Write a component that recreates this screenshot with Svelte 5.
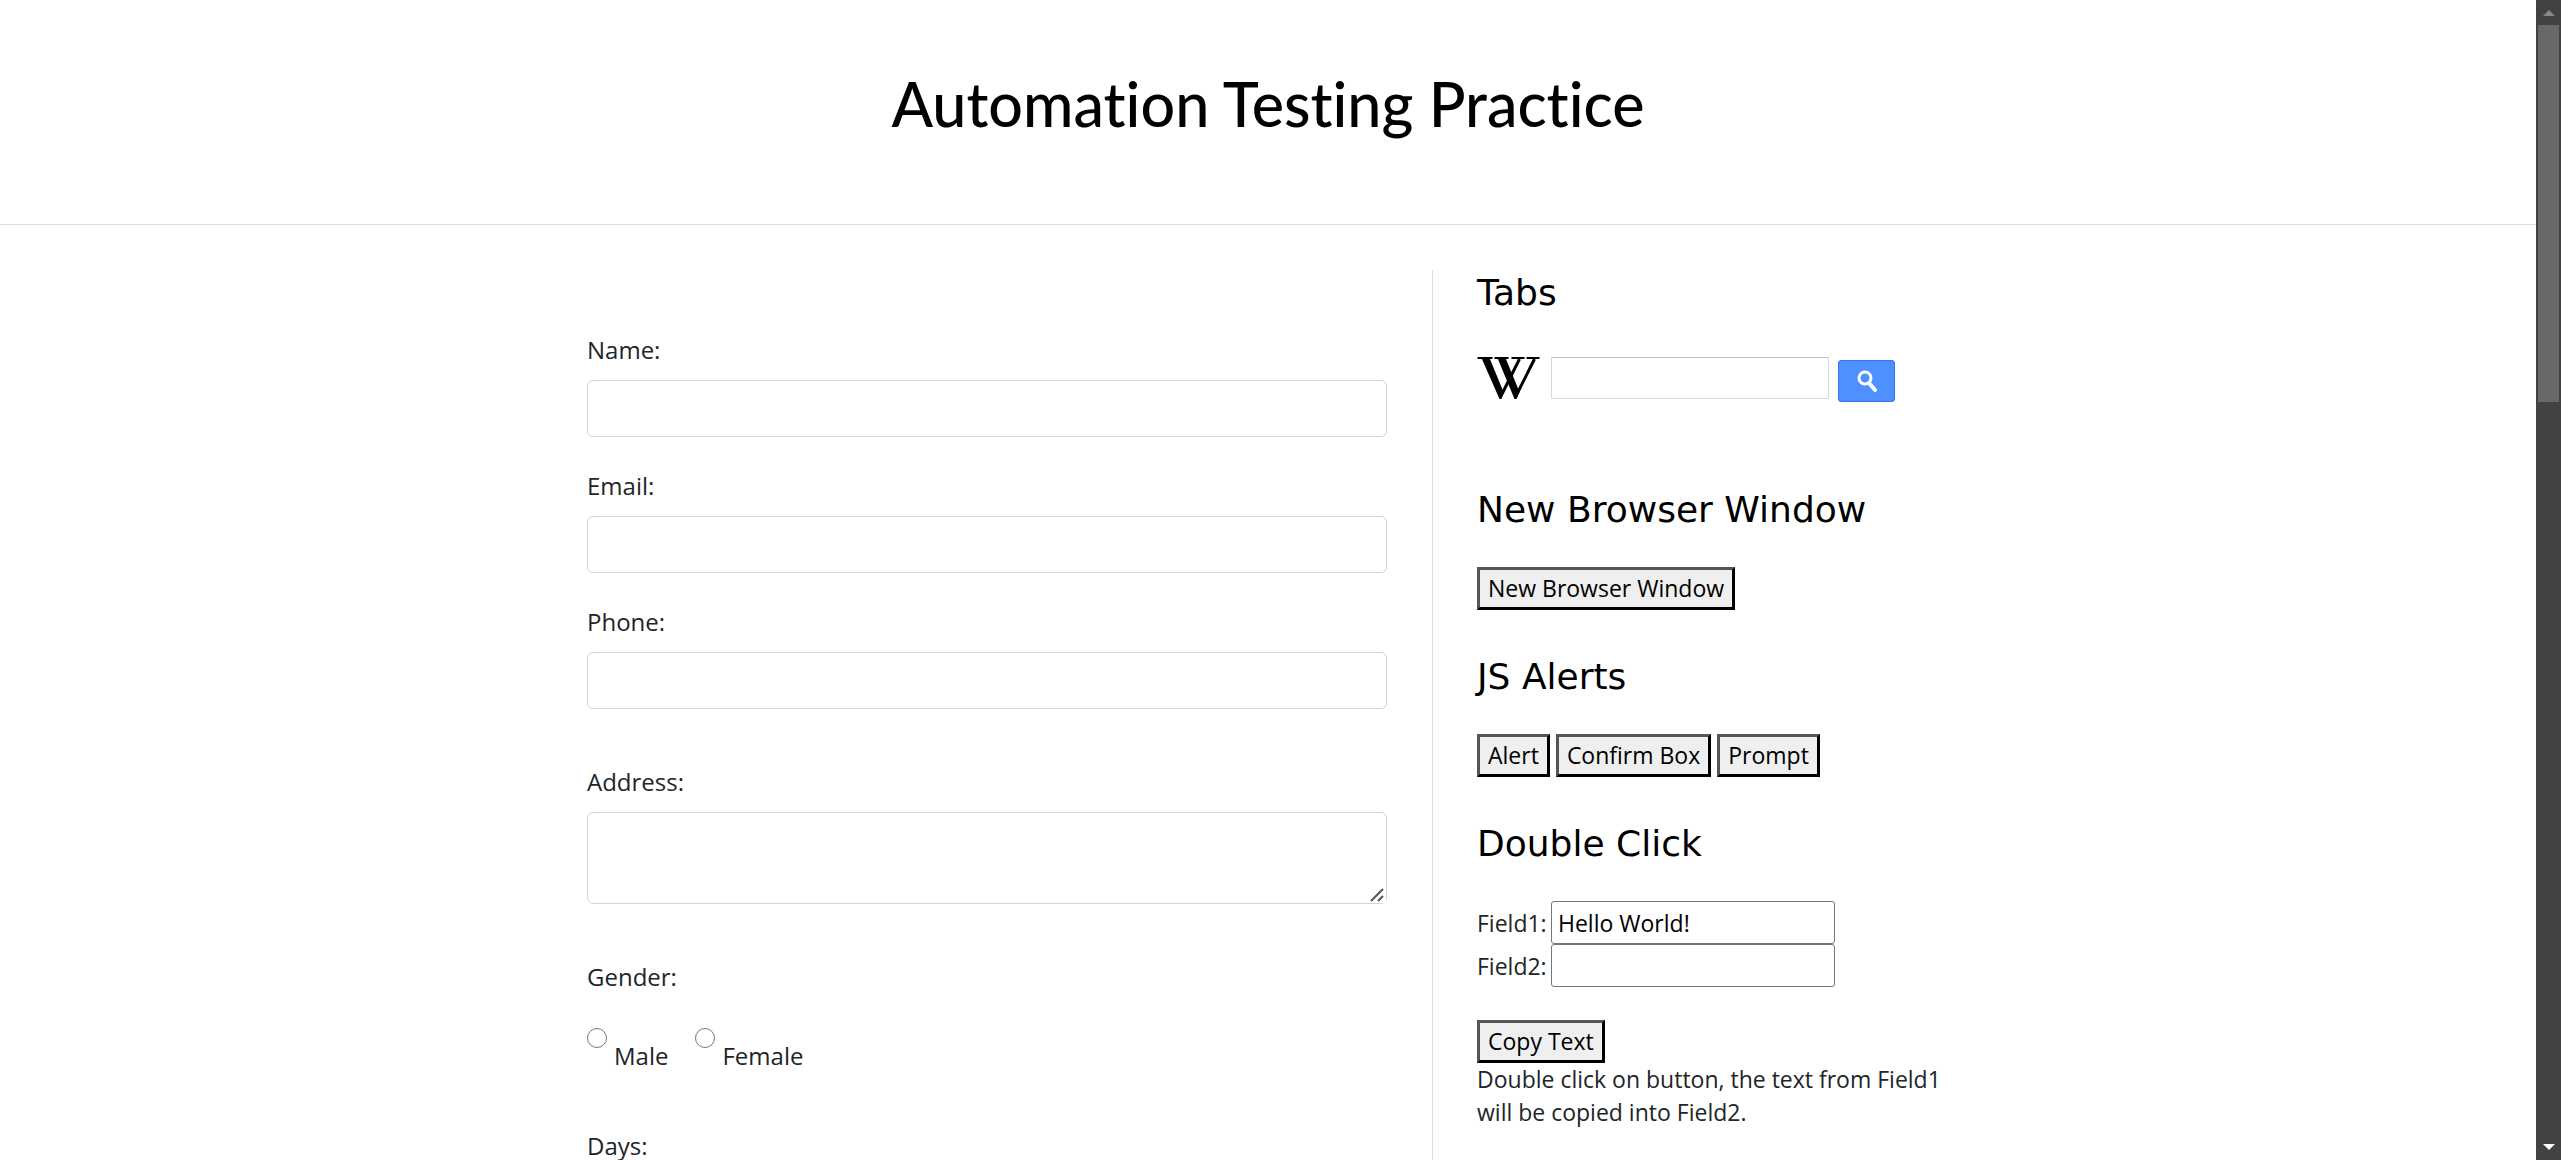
<script>
  const fields = [
    { id: 'name', label: 'Name:', type: 'text' },
    { id: 'email', label: 'Email:', type: 'email' },
    { id: 'phone', label: 'Phone:', type: 'tel' }
  ];
  const genders = ['Male', 'Female'];
  const alerts = ['Alert', 'Confirm Box', 'Prompt'];
  let field1 = $state('Hello World!');
  let field2 = $state('');
  let gender = $state('');
  let query = $state('');
</script>

<div class="window">
  <div class="page">
    <header><h1>Automation Testing Practice</h1></header>
    <div class="columns">
      <main>
        <form>
          {#each fields as f}
            <div class="group">
              <label for={f.id}>{f.label}</label>
              <input class="control" id={f.id} type={f.type} />
            </div>
          {/each}
          <div class="group spaced">
            <label for="address">Address:</label>
            <div class="area">
              <textarea class="control" id="address"></textarea>
              <svg class="grip" viewBox="0 0 14 14" aria-hidden="true"><path d="M1 13L13 1M8 13L13 8" /></svg>
            </div>
          </div>
          <fieldset class="spaced">
            <legend>Gender:</legend>
            <div class="radios">
              {#each genders as g}
                <label class="radio"><input type="radio" name="gender" value={g} bind:group={gender} />{g}</label>
              {/each}
            </div>
          </fieldset>
          <fieldset class="days"><legend>Days:</legend></fieldset>
        </form>
      </main>
      <aside>
        <section class="tabs">
          <h2>Tabs</h2>
          <form class="search">
            <svg class="wiki" viewBox="0 0 62 42" role="img" aria-label="Wikipedia">
              <g fill="#000">
                <path d="M4 1H12L26 35L24 42H22Z" />
                <path d="M20 1H28L42 35L39 42H37Z" />
              </g>
              <g fill="none" stroke="#000">
                <path d="M23 40L42 2M38 40L57 2" stroke-width="3" />
                <path d="M0 1H15M17 1H31M34 1H47M49 1H62" stroke-width="2" />
              </g>
            </svg>
            <input type="text" aria-label="Search Wikipedia" bind:value={query} />
            <button type="button" aria-label="Search">
              <svg viewBox="0 0 22 24"><circle cx="9" cy="9" r="6" fill="none" stroke="#fff" stroke-width="3" /><path d="M13 14L19 21" stroke="#fff" stroke-width="4" stroke-linecap="round" /></svg>
            </button>
          </form>
        </section>
        <section>
          <h2>New Browser Window</h2>
          <div class="row"><button class="plain" type="button">New Browser Window</button></div>
        </section>
        <section>
          <h2>JS Alerts</h2>
          <div class="row">
            {#each alerts as a}<button class="plain" type="button">{a}</button>{/each}
          </div>
        </section>
        <section>
          <h2>Double Click</h2>
          <div class="pair"><label for="field1">Field1:</label><input id="field1" bind:value={field1} /></div>
          <div class="pair"><label for="field2">Field2:</label><input id="field2" bind:value={field2} /></div>
          <button class="plain copy" type="button" ondblclick={() => (field2 = field1)}>Copy Text</button>
          <p>Double click on button, the text from Field1 will be copied into Field2.</p>
        </section>
      </aside>
    </div>
  </div>
  <div class="scrollbar" aria-hidden="true">
    <svg class="up" viewBox="0 0 12 6"><path d="M0 6L6 0L12 6Z" /></svg>
    <div class="track"><div class="thumb"></div></div>
    <svg class="down" viewBox="0 0 12 6"><path d="M0 0H12L6 6Z" /></svg>
  </div>
</div>

<style>
  :global(body) { margin: 0; background: #fff; }
  .window, .window * { box-sizing: border-box; }
  .window {
    display: flex;
    height: 100vh;
    overflow: hidden;
    font-family: 'Open Sans', sans-serif;
    font-size: 23px;
    line-height: 33px;
    color: #212529;
  }
  .page { flex: 1; min-width: 0; overflow: hidden; background: #fff; }
  header { padding: 64px 0 80px; border-bottom: 1px solid #ddd; }
  h1 {
    margin: 0;
    font: 500 61px/80px Lato, sans-serif;
    font-variant-ligatures: none;
    text-align: center;
    color: #000;
  }
  .columns {
    display: grid;
    grid-template-columns: 891px 1fr;
    width: 100%;
    max-width: 1452px;
    margin: 45px auto 0;
  }
  main { padding: 60px 45px 48px; border-right: 1px solid #ddd; font-size: 24px; }
  aside { padding: 0 45px 0 44px; }
  label, legend { display: block; padding: 0; line-height: 40px; }
  fieldset { margin: 0; padding: 0; border: 0; }
  .group { margin-bottom: 29px; }
  .group label { margin-bottom: 10px; }
  .spaced { margin-top: 53px; }
  .control {
    display: block;
    width: 100%;
    height: 57px;
    padding: 8px 18px;
    border: 1px solid #ced4da;
    border-radius: 6px;
    background: #fff;
    font: inherit;
  }
  .area { position: relative; }
  textarea.control { height: 92px; }
  textarea::-webkit-resizer { background: #fff; }
  .grip {
    position: absolute;
    right: 3px;
    bottom: 2px;
    width: 14px;
    height: 14px;
    fill: none;
    stroke: #555;
    stroke-width: 2;
    pointer-events: none;
  }
  .radios { display: flex; gap: 27px; margin-top: 39px; }
  .radio { display: flex; gap: 7px; }
  .radio input { width: 20px; height: 20px; margin: -8px 0 0; }
  .days { margin-top: 50px; }
  h2 {
    margin: 0 0 34px;
    font: 400 36px/46px 'DejaVu Sans', sans-serif;
    color: #000;
  }
  section { margin-bottom: 44px; }
  .search { display: flex; height: 93px; padding-top: 7px; }
  .search .wiki { width: 63px; height: 42px; }
  .search input {
    width: 278px;
    height: 42px;
    margin: 0 9px 0 11px;
    padding: 0 8px;
    border: 1px solid #d9d9d9;
    border-top-color: #c0c0c0;
    background: #fff;
    font: inherit;
  }
  .search button {
    display: flex;
    align-items: center;
    justify-content: center;
    width: 57px;
    height: 42px;
    margin-top: 3px;
    padding: 0;
    border: 1px solid #3079ed;
    border-radius: 3px;
    background: #4d90fe;
  }
  .search button svg { width: 22px; height: 24px; }
  .row { display: flex; gap: 6px; }
  .plain {
    display: block;
    height: 43px;
    padding: 0 8px;
    border: 3px solid;
    border-color: #555 #000 #000 #555;
    background: #efefef;
    font: inherit;
    color: #000;
  }
  .pair { display: flex; align-items: center; gap: 6px; }
  .pair label { width: 68px; }
  .pair input {
    width: 284px;
    height: 43px;
    padding: 0 6px;
    border: 1px solid #767676;
    border-radius: 3px;
    background: #fff;
    font: inherit;
    color: #000;
  }
  .copy { margin-top: 33px; }
  p { margin: 0; }
  .scrollbar { display: flex; flex-direction: column; align-items: center; width: 25px; padding: 10px 0; background: #424242; }
  .scrollbar svg { width: 12px; height: 6px; }
  .up { fill: #888; }
  .down { fill: #fff; }
  .track { flex: 1; width: 21px; padding: 9px 0; }
  .thumb { height: 34%; background: #686868; }
</style>
